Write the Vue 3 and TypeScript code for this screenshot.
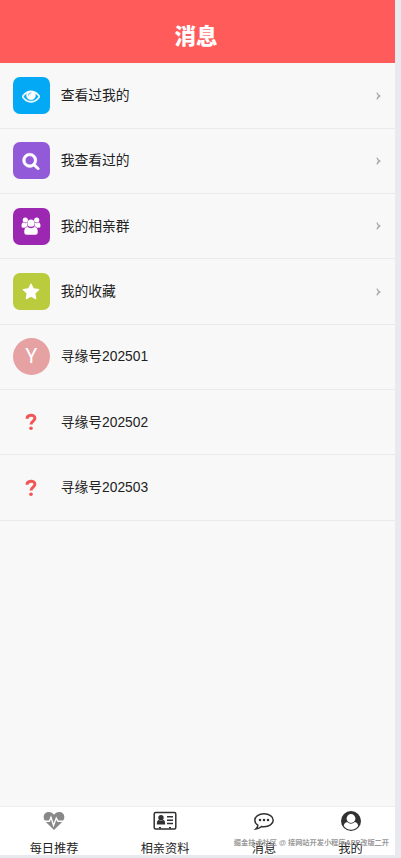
<script setup lang="ts">
interface Entry {
  label: string
  icon: string
}

const entries: Entry[] = [
  { label: '查看过我的', icon: 'eye' },
  { label: '我查看过的', icon: 'search' },
  { label: '我的相亲群', icon: 'users' },
  { label: '我的收藏', icon: 'star' },
]

const members = [
  { label: '寻缘号202501', initial: 'Y' },
  { label: '寻缘号202502', initial: '' },
  { label: '寻缘号202503', initial: '' },
]
</script>

<template>
  <div class="screen">
    <main class="phone">
      <header class="header"><h1>消息</h1></header>
      <section class="list">
        <div v-for="entry in entries" :key="entry.icon" class="row">
          <span class="tile" :class="entry.icon">
            <svg v-if="entry.icon === 'eye'" width="18" height="18" viewBox="0 0 1792 1792">
              <path stroke="#fff" stroke-width="50" d="M1664 960q-152-236-381-353 61 104 61 225 0 185-131.500 316.500t-316.500 131.500-316.500-131.500-131.500-316.500q0-121 61-225-229 117-381 353 133 205 333.500 326.500t434.500 121.500 434.500-121.500 333.500-326.500zm-720-384q0-20-14-34t-34-14q-125 0-214.500 89.500t-89.500 214.500q0 20 14 34t34 14 34-14 14-34q0-86 61-147t147-61q20 0 34-14t14-34zm848 384q0 34-20 69-140 230-376.500 368.500t-499.500 138.500-499.500-139-376.500-368q-20-35-20-69t20-69q140-229 376.500-368t499.500-139 499.500 139 376.500 368q20 35 20 69z" />
            </svg>
            <svg v-else-if="entry.icon === 'search'" width="18" height="18" viewBox="0 0 1792 1792">
              <path stroke="#fff" stroke-width="50" d="M1216 832q0-185-131.500-316.500t-316.500-131.500-316.500 131.500-131.500 316.500 131.500 316.500 316.500 131.500 316.500-131.500 131.500-316.500zm512 832q0 52-38 90t-90 38q-54 0-90-38l-343-342q-179 124-399 124-143 0-273.500-55.500t-225-150-150-225-55.500-273.500 55.500-273.500 150-225 225-150 273.500-55.500 273.500 55.500 225 150 150 225 55.500 273.500q0 220-124 399l343 343q37 37 37 90z" />
            </svg>
            <svg v-else-if="entry.icon === 'users'" width="20" height="20" viewBox="0 0 20 20">
              <circle cx="4.3" cy="4" r="2.6" />
              <circle cx="15.7" cy="4" r="2.6" />
              <path d="M.5 10.2C.5 7.7 1.100 6.400 2.500 6.500Q4.300 7.600 6 6.800Q5.700 9 7 10.500Q5 10.400 4 11.700H2.300Q.5 11.700.5 10.200zM19.500 10.200C19.500 7.700 18.900 6.400 17.500 6.500Q15.700 7.600 14 6.800Q14.300 9 13 10.500Q15 10.400 16 11.700H17.700Q19.500 11.700 19.500 10.200z" />
              <circle cx="10" cy="7.200" r="3.600" />
              <path d="M6.300 11Q10 13.300 13.700 11C16 11.100 16.800 13.300 16.800 16.300Q16.800 18.800 14.400 18.800H5.600Q3.200 18.800 3.200 16.300C3.200 13.300 4 11.100 6.300 11z" />
            </svg>
            <svg v-else width="18" height="18" viewBox="0 0 1792 1792">
              <path d="M1728 647q0 22-26 48l-363 354 86 500q1 7 1 20 0 21-10.500 35.500t-30.500 14.500q-19 0-40-12l-449-236-449 236q-22 12-40 12-21 0-31.500-14.500t-10.500-35.500q0-6 2-20l86-500-364-354q-25-27-25-48 0-37 56-46l502-73 225-455q19-41 49-41t49 41l225 455 502 73q56 9 56 46z" />
            </svg>
          </span>
          <span class="label">{{ entry.label }}</span>
          <svg class="chevron" width="5" height="8" viewBox="0 0 5 8">
            <path d="M1 .6Q1.600 3 3.600 4Q1.600 5 1 7.400" />
          </svg>
        </div>
        <div v-for="member in members" :key="member.label" class="row">
          <span v-if="member.initial" class="avatar">{{ member.initial }}</span>
          <span v-else class="unknown">
            <svg width="12" height="18" viewBox="0 0 12 18">
              <path d="M2 5.700C2.200 1.300 9.900.9 9.900 5.300C9.900 8.200 6 8 6 11.600" />
              <circle cx="6" cy="15.200" r="1.800" />
            </svg>
          </span>
          <span class="label">{{ member.label }}</span>
        </div>
      </section>

      <nav class="tabs">
        <div class="tab daily">
          <svg width="22" height="22" viewBox="0 0 22 22">
            <path fill="#888" d="M11 20L2.600 11.700C-1.200 7.500 1 2 5.700 2C8.300 2 9.700 3.300 11 4.800C12.300 3.300 13.700 2 16.300 2C21 2 23.200 7.500 19.400 11.700z" />
            <path class="pulse" d="M1 11.200H6.400L8 7.300L10.500 15.400L13.300 8.200L15 11.200H21" />
          </svg>
          <span>每日推荐</span>
        </div>
        <div class="tab profile">
          <svg width="24" height="22" viewBox="0 0 24 22">
            <rect class="line" x="1.200" y="2.500" width="21.600" height="16.500" rx="1.500" />
            <circle cx="8" cy="7.800" r="2.700" />
            <path d="M3.800 14.500C3.800 11.300 4.600 10.200 6 10Q8 11.400 10 10C11.500 10.200 12.200 11.300 12.200 14.500z" />
            <path class="line" d="M14 6.800H20M14 10.200H20M14 13.600H20M6 17.700H8M16 17.700H18" />
          </svg>
          <span>相亲资料</span>
        </div>
        <div class="tab messages">
          <svg width="22" height="22" viewBox="0 0 22 22">
            <path class="line" d="M11 3.800C16.100 3.800 20.200 6.500 20.200 10.300S16.100 16.800 11 16.800Q9.800 16.800 8.500 16.500Q6.200 18.700 2.800 19Q4.700 17.300 4.800 15.200Q1.800 13.200 1.800 10.300C1.800 6.500 5.900 3.800 11 3.800z" />
            <circle cx="7" cy="10.100" r="1.250" /><circle cx="11" cy="10.100" r="1.250" /><circle cx="15" cy="10.100" r="1.250" />
          </svg>
          <span>消息</span>
        </div>
        <div class="tab mine">
          <svg width="22" height="22" viewBox="0 0 22 22">
            <circle cx="11" cy="11" r="10" />
            <path fill="#fff" d="M3.700 15.800C4.300 13.400 5.400 12.300 7.200 12Q11 15.300 14.800 12C16.600 12.300 17.700 13.400 18.300 15.800A8.800 8.800 0 0 1 3.700 15.800z" />
            <circle cx="11" cy="8.500" r="4.400" fill="#fff" />
          </svg>
          <span>我的</span>
        </div>
      </nav>
    </main>
    <div class="watermark">掘金技术社区 @ 接网站开发小程序APP改版二开</div>
  </div>
</template>

<style>
body { background: #e9eaef; overflow: hidden; }
</style>

<style scoped>
.screen {
  position: relative;
  box-sizing: border-box;
  height: 858px;
  padding: 0 6px 3px 0;
  font-family: "Liberation Sans", "Noto Sans CJK SC", sans-serif;
  color: #222;
}
.phone { display: flex; flex-direction: column; height: 855px; background: #f8f8f8; }
.header {
  box-sizing: border-box;
  height: 63.400px;
  padding-top: 23px;
  background: #ff5b5b;
  color: #fff;
  text-align: center;
}
h1 { margin: 0 0 0 -3px; font-size: 21.500px; line-height: 28px; font-weight: 900; }
.list { flex: 1; }
.row {
  box-sizing: border-box;
  display: flex;
  align-items: center;
  height: 65.350px;
  padding: 0 14px 0 12.700px;
  border-bottom: 1px solid #e9eaec;
}
.tile, .avatar, .unknown {
  display: flex;
  align-items: center;
  justify-content: center;
  width: 37px;
  height: 37px;
  margin-right: 11px;
}
.tile { border-radius: 7px; fill: #fff; }
.eye { background: #03a9f4; }
.search { background: #9259d9; }
.users { background: #9c27b0; }
.star { background: #bacb3d; }
.avatar { border-radius: 50%; background: #e6a1a3; color: #fff; font: 20px/37px Roboto, sans-serif; }
.unknown svg { fill: #f15454; }
.unknown path { fill: none; stroke: #f15454; stroke-width: 3; }
.label { flex: 1; padding-top: 1px; font-size: 13.800px; line-height: 20px; }
.chevron { fill: none; stroke: #aaa; stroke-width: 1.400; }
.tabs {
  box-sizing: border-box;
  display: flex;
  height: 49px;
  background: #fff;
  border-top: 1px solid #eeeeef;
}
.tab {
  display: flex;
  flex-direction: column;
  align-items: center;
  padding-top: 3px;
  font-size: 12.200px;
  line-height: 16px;
  fill: #303133;
}
.tab svg { flex: none; margin-bottom: 9px; }
.tab span { height: 14px; white-space: nowrap; }
.daily { width: 108px; }
.profile { width: 114px; }
.messages { width: 84px; }
.mine { width: 89px; }
.line { fill: none; stroke: #303133; stroke-width: 1.500; }
.pulse { fill: none; stroke: #fff; stroke-width: 1.400; }
.watermark {
  position: absolute;
  top: 837.500px;
  right: 12px;
  color: #999;
  font-size: 7.200px;
  line-height: 10px;
  font-weight: 700;
  white-space: nowrap;
}
</style>
